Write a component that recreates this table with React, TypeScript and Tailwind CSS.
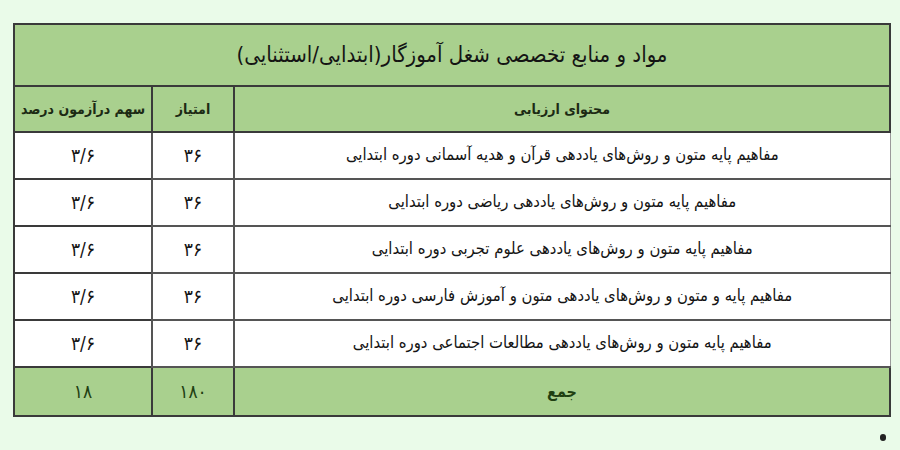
import React from 'react';

// Persian exam-resources table (green Excel-style)

const rows = [
  'مفاهیم پایه متون و روش‌های یاددهی قرآن و هدیه آسمانی دوره ابتدایی',
  'مفاهیم پایه متون و روش‌های یاددهی ریاضی دوره ابتدایی',
  'مفاهیم پایه متون و روش‌های یاددهی علوم تجربی دوره ابتدایی',
  'مفاهیم پایه و متون و روش‌های یاددهی متون و آموزش فارسی دوره ابتدایی',
  'مفاهیم پایه متون و روش‌های یاددهی مطالعات اجتماعی دوره ابتدایی',
];

export default function App() {
  return (
    <div
      className="w-[900px] h-[450px] bg-[#eafbe9] pt-[23px] pl-[13px] relative overflow-hidden"
      style={{ fontFamily: '"DejaVu Sans Condensed", "DejaVu Sans", sans-serif' }}
    >
      <table dir="rtl" className="w-[876px] border-collapse text-[#141414] table-fixed">
        <colgroup>
          <col className="w-[656px]" />
          <col className="w-[82px]" />
          <col className="w-[138px]" />
        </colgroup>
        <tbody>
          <tr className="h-[62px] bg-[#a9d08e]">
            <td colSpan={3} className="border-2 border-[#3a3a3a] text-center text-[22px] pb-[2px]">
              مواد و منابع تخصصی شغل آموزگار(ابتدایی/استثنایی)
            </td>
          </tr>
          <tr className="h-[46px] bg-[#a9d08e] text-[14px] font-bold text-[#1c2a14]">
            <td className="border-2 border-[#3a3a3a] text-center">محتوای ارزیابی</td>
            <td className="border-2 border-[#3a3a3a] text-center">امتیاز</td>
            <td className="border-2 border-[#3a3a3a] text-center">سهم درآزمون درصد</td>
          </tr>
          {rows.map((r, i) => (
            <tr key={i} className="h-[47px] bg-white">
              <td className="border-y-2 border-l-2 border-r border-y-[#555] border-l-[#555] border-r-[#9a9a9a] text-center text-[16.5px]">
                {r}
              </td>
              <td className="border-2 border-[#555] text-center text-[19px]">۳۶</td>
              <td className="border-2 border-[#3a3a3a] text-center text-[19px]">۳/۶</td>
            </tr>
          ))}
          <tr className="h-[49px] bg-[#a9d08e] text-[#1f4012]">
            <td className="border-2 border-[#3a3a3a] text-center text-[16px] font-bold">جمع</td>
            <td className="border-2 border-[#3a3a3a] text-center text-[19px]">۱۸۰</td>
            <td className="border-2 border-[#3a3a3a] text-center text-[19px]">۱۸</td>
          </tr>
        </tbody>
      </table>
      <div className="absolute left-[880px] top-[434px] w-[6px] h-[7px] rounded-full bg-[#222]" />
    </div>
  );
}
